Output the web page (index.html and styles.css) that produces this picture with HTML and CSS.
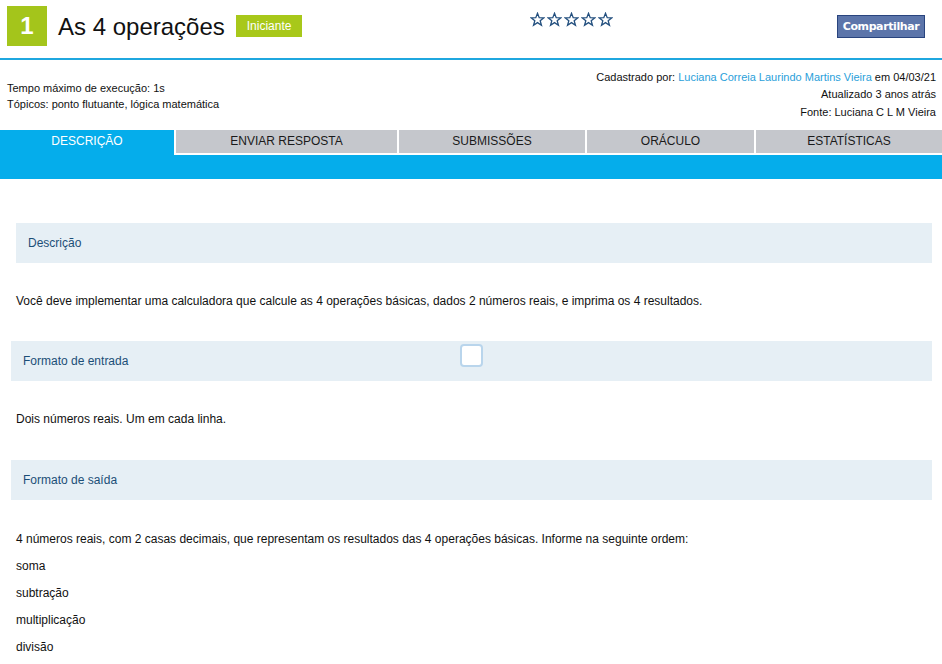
FILE: index.html
```html
<!DOCTYPE html>
<html lang="pt">
<head>
<meta charset="utf-8">
<title>As 4 operações</title>
<link rel="stylesheet" href="styles.css">
</head>
<body>
<header class="top">
  <div class="title-group">
    <span class="num">1</span>
    <h1 class="title">As 4 operações</h1>
    <span class="level">Iniciante</span>
  </div>
  <div class="stars">
    <svg viewBox="0 0 14 14" class="star"><path d="M7 1.2 L8.6 5.3 L12.9 5.4 L9.5 8.1 L10.7 12.4 L7 9.9 L3.3 12.4 L4.5 8.1 L1.1 5.4 L5.4 5.3 Z"/></svg>
    <svg viewBox="0 0 14 14" class="star"><path d="M7 1.2 L8.6 5.3 L12.9 5.4 L9.5 8.1 L10.7 12.4 L7 9.9 L3.3 12.4 L4.5 8.1 L1.1 5.4 L5.4 5.3 Z"/></svg>
    <svg viewBox="0 0 14 14" class="star"><path d="M7 1.2 L8.6 5.3 L12.9 5.4 L9.5 8.1 L10.7 12.4 L7 9.9 L3.3 12.4 L4.5 8.1 L1.1 5.4 L5.4 5.3 Z"/></svg>
    <svg viewBox="0 0 14 14" class="star"><path d="M7 1.2 L8.6 5.3 L12.9 5.4 L9.5 8.1 L10.7 12.4 L7 9.9 L3.3 12.4 L4.5 8.1 L1.1 5.4 L5.4 5.3 Z"/></svg>
    <svg viewBox="0 0 14 14" class="star"><path d="M7 1.2 L8.6 5.3 L12.9 5.4 L9.5 8.1 L10.7 12.4 L7 9.9 L3.3 12.4 L4.5 8.1 L1.1 5.4 L5.4 5.3 Z"/></svg>
  </div>
  <div class="share-wrap">
    <button class="share">Compartilhar</button>
  </div>
</header>

<section class="info">
  <div class="info-left">
    <div>Tempo máximo de execução: 1s</div>
    <div>Tópicos: ponto flutuante, lógica matemática</div>
  </div>
  <div class="info-right">
    <div>Cadastrado por: <a class="author" href="#">Luciana Correia Laurindo Martins Vieira</a> em 04/03/21</div>
    <div>Atualizado 3 anos atrás</div>
    <div>Fonte: Luciana C L M Vieira</div>
  </div>
</section>

<nav class="tabbar">
  <div class="tabs">
    <a class="tab active w1" href="#">DESCRIÇÃO</a>
    <a class="tab w2" href="#">ENVIAR RESPOSTA</a>
    <a class="tab w3" href="#">SUBMISSÕES</a>
    <a class="tab w4" href="#">ORÁCULO</a>
    <a class="tab w5" href="#">ESTATÍSTICAS</a>
  </div>
</nav>

<main class="content">
  <div class="sec-head first">Descrição</div>
  <div class="text">
    <p>Você deve implementar uma calculadora que calcule as 4 operações básicas, dados 2 números reais, e imprima os 4 resultados.</p>
  </div>

  <div class="sec-head">Formato de entrada<span class="check"></span></div>
  <div class="text second">
    <p>Dois números reais. Um em cada linha.</p>
  </div>

  <div class="sec-head">Formato de saída</div>
  <div class="text last">
    <p>4 números reais, com 2 casas decimais, que representam os resultados das 4 operações básicas. Informe na seguinte ordem:</p>
    <p>soma</p>
    <p>subtração</p>
    <p>multiplicação</p>
    <p>divisão</p>
  </div>
</main>
</body>
</html>
```

FILE: styles.css
```css
* { box-sizing: border-box; }

html, body {
  margin: 0;
  padding: 0;
  background: #ffffff;
  font-family: "Liberation Sans", Arial, sans-serif;
  color: #111111;
}

.top {
  display: flex;
  align-items: flex-start;
  height: 60px;
  border-bottom: 2px solid #1fa7df;
}

.title-group {
  flex: 1;
  display: flex;
  align-items: flex-start;
  padding: 6px 0 0 7px;
}

.num {
  width: 40px;
  height: 40px;
  background: #a4c51b;
  color: #ffffff;
  font-weight: bold;
  font-size: 24px;
  display: flex;
  align-items: center;
  justify-content: center;
}

.title {
  margin: 0 0 0 11px;
  font-size: 24px;
  font-weight: normal;
  color: #111111;
  line-height: 42px;
}

.level {
  margin: 9px 0 0 11px;
  background: #a8c81a;
  color: #ffffff;
  font-size: 12px;
  height: 22px;
  line-height: 22px;
  padding: 0 11px;
}

.stars {
  display: flex;
  gap: 2px;
  padding: 12px 0 0 0;
}

.star {
  width: 15px;
  height: 15px;
  fill: none;
  stroke: #24507f;
  stroke-width: 1.2;
  stroke-linejoin: miter;
}

.share-wrap {
  width: 329px;
  display: flex;
  justify-content: flex-end;
  padding: 15px 17px 0 0;
}

.share {
  width: 88px;
  height: 23px;
  background: #5c75aa;
  border: 1px solid #29447e;
  color: #ffffff;
  font-family: "DejaVu Sans", Verdana, sans-serif;
  font-weight: bold;
  font-size: 11px;
  letter-spacing: -0.4px;
  padding: 0;
}

.info {
  height: 70px;
  display: flex;
  align-items: center;
  justify-content: space-between;
  font-size: 11px;
  color: #111111;
}

.info-left {
  padding-left: 7px;
  line-height: 16px;
  padding-top: 2px;
}

.info-right {
  padding-right: 6px;
  text-align: right;
  line-height: 17.5px;
}

.author {
  color: #2aa0da;
  text-decoration: none;
}

.tabbar {
  height: 49px;
  background: #05adeb;
}

.tabs {
  display: flex;
  height: 25px;
}

.tab {
  display: flex;
  align-items: center;
  justify-content: center;
  font-size: 12px;
  color: #1a1a1a;
  text-decoration: none;
  background: #c5c7cc;
  border-left: 2px solid #ffffff;
  border-bottom: 2px solid #ffffff;
  padding-bottom: 2px;
}

.tab.active {
  background: #05adeb;
  color: #ffffff;
  border: none;
  padding-bottom: 4px;
}

.w1 { width: 174px; }
.w2 { width: 223px; }
.w3 { width: 188px; }
.w4 { width: 169px; }
.w5 { width: 188px; }

.content {
  padding: 44px 10px 0 11px;
}

.sec-head {
  position: relative;
  height: 40px;
  background: #e6eff5;
  color: #1b4e77;
  font-size: 12px;
  line-height: 40px;
  padding-left: 12px;
}

.sec-head.first {
  margin-left: 5px;
}

.check {
  position: absolute;
  left: 449px;
  top: 3px;
  width: 23px;
  height: 23px;
  border: 2px solid #b9d5ec;
  border-radius: 4px;
  background: #ffffff;
}

.text {
  padding: 25px 0 26px 5px;
  font-size: 12px;
}

.text.second {
  padding-bottom: 27px;
}

.text.last {
  padding-top: 26px;
}

.text p {
  margin: 0;
  line-height: 27px;
}
```
